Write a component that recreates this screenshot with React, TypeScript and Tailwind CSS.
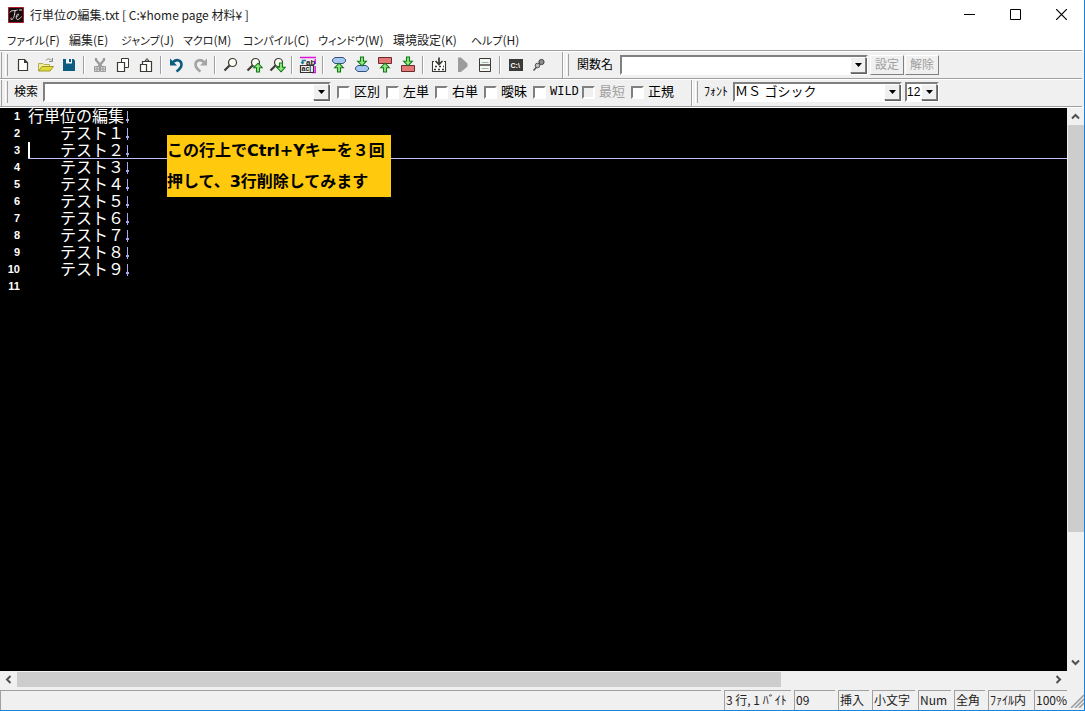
import React from "react";

const GOTHIC = "font-['Liberation_Sans','Noto_Sans_CJK_JP',sans-serif]";
const UI = "font-['Noto_Sans_CJK_JP',sans-serif]";

/* ---------- toolbar icons ---------- */

function Icon({ children }: { children: React.ReactNode }) {
  return (
    <svg width="18" height="18" viewBox="0 0 18 18" aria-hidden="true" className="shrink-0">
      {children}
    </svg>
  );
}

const UpArrow = ({ x, y }: { x: number; y: number }) => (
  <path
    transform={`translate(${x} ${y})`}
    d="M5 .7 L9.3 5.2 H6.5 V9.5 H3.5 V5.2 H.7 Z"
    fill="#93e57f"
    stroke="#117a17"
    strokeWidth="1.1"
  />
);
const DownArrow = ({ x, y }: { x: number; y: number }) => (
  <path
    transform={`translate(${x} ${y})`}
    d="M5 9.3 L9.3 4.8 H6.5 V.5 H3.5 V4.8 H.7 Z"
    fill="#93e57f"
    stroke="#117a17"
    strokeWidth="1.1"
  />
);
const Lens = () => (
  <>
    <circle cx="10.5" cy="6.5" r="4" fill="#fdfdf6" stroke="#3b3933" strokeWidth="1.2" />
    <path d="M7.5 9.5 L2.5 14.5" stroke="#3b3933" strokeWidth="2.2" />
  </>
);

const NewIcon = (
  <Icon>
    <path d="M4.5 3.5 H10.5 L13.5 6.5 V14.5 H4.5 Z" fill="#fff" stroke="#3b3933" strokeWidth="1.2" />
    <path d="M10 3 V7 H14 Z" fill="#3b3933" />
  </Icon>
);
const OpenIcon = (
  <Icon>
    <path d="M1.5 15 V7.5 H6 L7 8.5 H12.5 V10" fill="#f0ee9a" stroke="#b5ad55" />
    <path d="M1.5 15 L5 10.5 H16.5 L13 15 Z" fill="#e1d93a" stroke="#a09a2a" />
    <path d="M9 4.5 C10 2.5 13 2.5 15 4.5 M15.5 2 V5.5 H12" fill="none" stroke="#8a8a84" />
  </Icon>
);
const SaveIcon = (
  <Icon>
    <path d="M3 3 H13.5 L15 4.5 V15 H3 Z" fill="#0b5c80" />
    <path d="M6 3 H12 V7.5 H6 Z" fill="#f4f8fa" />
    <path d="M9 3 H11 V6 H9 Z" fill="#0b5c80" />
  </Icon>
);
const CutIcon = (
  <Icon>
    <path d="M5 2 V4 L10.5 10.5 M13 2 V4 L7.5 10.5" fill="none" stroke="#9a9a9a" strokeWidth="2.2" />
    <path d="M3.5 10.5 H8.5 V15.5 H3.5 Z M9.5 10.5 H14.5 V15.5 H9.5 Z" fill="#d8d8d8" stroke="#9a9a9a" />
    <path d="M6 11 V15 M4 13 H8 M12 11 V15 M10 13 H14" stroke="#9a9a9a" />
  </Icon>
);
const CopyIcon = (
  <Icon>
    <path d="M7.5 2.5 H14.5 V11.5 H7.5 Z" fill="#fff" stroke="#3b3933" />
    <path d="M3.5 6.5 H10.5 V15.5 H3.5 Z" fill="#fff" stroke="#3b3933" strokeWidth="1.2" />
  </Icon>
);
const PasteIcon = (
  <Icon>
    <path d="M5.5 8 V5.5 H14.5 V15.5 H10" fill="#fff" stroke="#3b3933" strokeWidth="1.2" />
    <path d="M8 5 L10 2.5 L12 5 Z" fill="#fff" stroke="#3b3933" />
    <path d="M3.5 8.5 H9.5 V15.5 H3.5 Z" fill="#fff" stroke="#3b3933" strokeWidth="1.2" />
  </Icon>
);
const UndoIcon = (
  <Icon>
    <path d="M5 6 C9 2.5 13.5 4.5 13.5 8.5 C13.5 11 12 13 8.5 15.5" fill="none" stroke="#0b5c80" strokeWidth="2.6" />
    <path d="M2 2.5 V9.5 H9 Z" fill="#0b5c80" />
  </Icon>
);
const RedoIcon = (
  <Icon>
    <path d="M13 6 C9 2.5 4.5 4.5 4.5 8.5 C4.5 11 6 13 9.5 15.5" fill="none" stroke="#a3a3a3" strokeWidth="2.6" />
    <path d="M16 2.5 V9.5 H9 Z" fill="#a3a3a3" />
  </Icon>
);
const FindIcon = (
  <Icon>
    <Lens />
  </Icon>
);
const FindUpIcon = (
  <Icon>
    <Lens />
    <UpArrow x={8} y={6.5} />
  </Icon>
);
const FindDownIcon = (
  <Icon>
    <Lens />
    <DownArrow x={8} y={6.5} />
  </Icon>
);
const ReplaceIcon = (
  <Icon>
    <path d="M1 1.5 H17 M16.2 3 V8 M16.2 10 V16 M13 16.5 H17" fill="none" stroke="#e010e0" strokeWidth="1.4" />
    <path d="M7 4.5 H3.5 V8" fill="none" stroke="#187898" strokeWidth="1.6" />
    <path d="M1.5 6 L3.5 8.5 L5.5 6" fill="#187898" />
    <text x="7" y="8.5" fontSize="8" fontWeight="700" fontFamily="Liberation Sans" fill="#222">ab</text>
    <path d="M1.5 9.5 H14.5 V16.5 H1.5 Z" fill="#f4f4f4" stroke="#333" strokeWidth="1.2" />
    <text x="2.5" y="15" fontSize="7" fontWeight="700" fontFamily="Liberation Sans" fill="#222">ac|</text>
  </Icon>
);
const PillUpIcon = (
  <Icon>
    <path d="M5 1.5 H13 L15.5 3.5 V5.5 L13 7.5 H5 L2.5 5.5 V3.5 Z" fill="#a8c8f4" stroke="#34507c" />
    <UpArrow x={4} y={6.5} />
  </Icon>
);
const PillDownIcon = (
  <Icon>
    <path d="M5 9.5 H13 L15.5 11.5 V13.5 L13 15.5 H5 L2.5 13.5 V11.5 Z" fill="#a8c8f4" stroke="#34507c" />
    <DownArrow x={4} y={0.5} />
  </Icon>
);
const BoxUpIcon = (
  <Icon>
    <path d="M2.5 1.5 H15.5 V7.5 H2.5 Z" fill="#e27878" stroke="#6c2a2a" />
    <UpArrow x={4} y={6.5} />
  </Icon>
);
const BoxDownIcon = (
  <Icon>
    <path d="M2.5 9.5 H15.5 V15.5 H2.5 Z" fill="#e27878" stroke="#6c2a2a" />
    <DownArrow x={4} y={0.5} />
  </Icon>
);
const CompileIcon = (
  <Icon>
    <path d="M4 5.5 H2.5 V15.5 H15.5 V5.5 H14" fill="#fff" stroke="#3b3933" strokeWidth="1.1" />
    <path d="M9 1.5 V8 M5.5 5 L9 8.5 L12.5 5" fill="none" stroke="#3b3933" strokeWidth="1.7" />
    <path d="M5 10.5 H14 M4 13.5 H14" stroke="#3b3933" strokeWidth="1.6" strokeDasharray="2 2" />
  </Icon>
);
const RunIcon = (
  <Icon>
    <path d="M5 1.5 H8 L14.5 7.5 V10.5 L8 16 H5 Z" fill="#9c9c9c" />
  </Icon>
);
const SplitIcon = (
  <Icon>
    <path d="M3.5 2.5 H14.5 V15.5 H3.5 Z" fill="#f6f6f2" stroke="#3b3933" />
    <path d="M3.5 9 H14.5" stroke="#3b3933" strokeWidth="1.4" />
    <path d="M5.5 6.5 H12.5 M5.5 12.5 H12.5" stroke="#9db8b0" />
  </Icon>
);
const ConsoleIcon = (
  <Icon>
    <path d="M2 3 H16 V15 H2 Z" fill="#3a3a38" />
    <text x="3.5" y="11.5" fontSize="7" fontWeight="700" fontFamily="Liberation Sans" fill="#fff">C:\</text>
  </Icon>
);
const PlugIcon = (
  <Icon>
    <path d="M3.5 14.5 L8 9.5" stroke="#55534d" strokeWidth="1.6" />
    <circle cx="7.5" cy="9.5" r="2.3" fill="#bbb" stroke="#55534d" />
    <circle cx="11.5" cy="6" r="2.6" fill="#8d8d8d" stroke="#44423d" />
  </Icon>
);

type Tool = { label: string; icon: React.ReactNode; disabled?: boolean };

const toolGroups: Tool[][] = [
  [
    { label: "新規作成", icon: NewIcon },
    { label: "開く", icon: OpenIcon },
    { label: "保存", icon: SaveIcon },
  ],
  [
    { label: "切り取り", icon: CutIcon, disabled: true },
    { label: "コピー", icon: CopyIcon },
    { label: "貼り付け", icon: PasteIcon },
  ],
  [
    { label: "元に戻す", icon: UndoIcon },
    { label: "やり直し", icon: RedoIcon, disabled: true },
  ],
  [
    { label: "検索ダイアログ", icon: FindIcon },
    { label: "上検索", icon: FindUpIcon },
    { label: "下検索", icon: FindDownIcon },
  ],
  [{ label: "置換", icon: ReplaceIcon }],
  [
    { label: "前の関数", icon: PillUpIcon },
    { label: "次の関数", icon: PillDownIcon },
    { label: "前のマーク", icon: BoxUpIcon },
    { label: "次のマーク", icon: BoxDownIcon },
  ],
  [
    { label: "コンパイル", icon: CompileIcon },
    { label: "実行", icon: RunIcon, disabled: true },
    { label: "分割", icon: SplitIcon },
  ],
  [
    { label: "コマンドプロンプト", icon: ConsoleIcon },
    { label: "接続", icon: PlugIcon },
  ],
];

/* ---------- small controls ---------- */

const SUNKEN = "border-2 border-t-[#808080] border-l-[#808080] border-r-white border-b-white";
const RAISED = "border border-t-white border-l-white border-r-[#808080] border-b-[#808080]";

const ArrowGlyph = () => (
  <svg width="7" height="4" viewBox="0 0 7 4" aria-hidden="true">
    <path d="M0 0 H7 L3.5 4 Z" fill="#000" />
  </svg>
);

function Combo({ id, label, width }: { id: string; label: string; width: string }) {
  return (
    <div className={`flex h-5 bg-white ${SUNKEN} ${width}`}>
      <input id={id} aria-label={label} className="min-w-0 flex-1 bg-white px-0.5 text-xs outline-none" />
      <button
        aria-label={`${label}の履歴`}
        className={`flex w-4 items-center justify-center bg-[#f0f0f0] shadow-[1px_1px_0_#606060] ${RAISED}`}
      >
        <ArrowGlyph />
      </button>
    </div>
  );
}

function Drop({ id, label, value, width, text }: { id: string; label: string; value: string; width: string; text: string }) {
  return (
    <div className={`relative h-5 bg-white ${SUNKEN} ${width}`}>
      <select
        id={id}
        aria-label={label}
        className={`block h-4 w-full appearance-none bg-white p-0 leading-4 outline-none ${text}`}
      >
        <option>{value}</option>
      </select>
      <span
        className={`pointer-events-none absolute top-0 right-0 flex h-4 w-4 items-center justify-center bg-[#f0f0f0] shadow-[1px_1px_0_#606060] ${RAISED}`}
      >
        <ArrowGlyph />
      </span>
    </div>
  );
}

const Grip = () => <span className="mr-1.5 h-[22px] w-[3px] shrink-0 border-r border-l border-r-[#a0a0a0] border-l-white" />;

function Band({ children, className = "" }: { children: React.ReactNode; className?: string }) {
  return (
    <div className={`flex h-[26px] items-center border-l border-[#a0a0a0] pl-[3px] ${className}`}>
      <Grip />
      {children}
    </div>
  );
}

const options = [
  { id: "case", label: "区別" },
  { id: "left", label: "左単" },
  { id: "right", label: "右単" },
  { id: "fuzzy", label: "曖昧" },
  { id: "wild", label: "WILD" },
  { id: "shortest", label: "最短", disabled: true },
  { id: "regex", label: "正規" },
];

const menus = [
  { label: "ファイル", accel: "(F)", width: "w-[62px]", size: "text-[11px]" },
  { label: "編集", accel: "(E)", width: "w-[52px]", size: "text-xs" },
  { label: "ジャンプ", accel: "(J)", width: "w-[62px]", size: "text-[11px]" },
  { label: "マクロ", accel: "(M)", width: "w-[60px]", size: "text-[11px]" },
  { label: "コンパイル", accel: "(C)", width: "w-[75px]", size: "text-[11px]" },
  { label: "ウィンドウ", accel: "(W)", width: "w-[75px]", size: "text-[11px]" },
  { label: "環境設定", accel: "(K)", width: "w-[78px]", size: "text-xs" },
  { label: "ヘルプ", accel: "(H)", width: "w-[62px]", size: "text-[11px]" },
];

const lines = [
  "行単位の編集",
  "　　テスト１",
  "　　テスト２",
  "　　テスト３",
  "　　テスト４",
  "　　テスト５",
  "　　テスト６",
  "　　テスト７",
  "　　テスト８",
  "　　テスト９",
  "",
];
const CURRENT = 2;

const statusCells = [
  { text: "3 行, 1 ﾊﾞｲﾄ", width: "w-[67px]" },
  { text: "09", width: "w-[41px]" },
  { text: "挿入", width: "w-[31px]" },
  { text: "小文字", width: "w-[43px]" },
  { text: "Num", width: "w-[33px]" },
  { text: "全角", width: "w-[31px]" },
  { text: "ﾌｧｲﾙ内", width: "w-[43px]" },
  { text: "100%", width: "w-[33px]" },
];

const chevrons = {
  up: "M1 6.5 L4.5 3 L8 6.5",
  down: "M1 2.5 L4.5 6 L8 2.5",
  left: "M6.5 1 L3 4.5 L6.5 8",
  right: "M2.5 1 L6 4.5 L2.5 8",
};

function ScrollButton({ dir, label }: { dir: keyof typeof chevrons; label: string }) {
  return (
    <button aria-label={label} className="flex h-[17px] w-[17px] shrink-0 items-center justify-center">
      <svg width="9" height="9" viewBox="0 0 9 9" aria-hidden="true">
        <path d={chevrons[dir]} fill="none" stroke="#505050" strokeWidth="2" />
      </svg>
    </button>
  );
}

/* ---------- page sections ---------- */

function TitleBar() {
  return (
    <header className="flex h-[29px] items-center bg-white pl-2">
      <svg width="16" height="16" viewBox="0 0 16 16" aria-hidden="true" className="mr-1.5">
        <path d="M.5 .5 H15.5 V15.5 H.5 Z" fill="#160c0e" stroke="#a51f28" />
        <path
          d="M2 5.5 C3 2.5 6 4.5 9.5 3 M7 4 C6.5 8 6 12 3.5 12.5 C2.5 12.5 2.5 11 3.5 11 M8 10 C10 9.5 11.5 7 10 7 C8 7.5 7.5 12.5 9.5 12.5 C11 12.5 12.5 11 13.5 9.5 M11 3 H14"
          fill="none"
          stroke="#e8dcdc"
        />
      </svg>
      <h1 className="flex-1 text-xs text-[#222222] [font-feature-settings:'palt']">行単位の編集.txt [ C:¥home page 材料¥ ]</h1>
      <button aria-label="最小化" className="flex h-7 w-[46px] items-center justify-center">
        <svg width="11" height="11" viewBox="0 0 11 11"><path d="M0 5.5 H11" stroke="#000" /></svg>
      </button>
      <button aria-label="最大化" className="flex h-7 w-[46px] items-center justify-center">
        <svg width="11" height="11" viewBox="0 0 11 11"><path d="M.5 .5 H10.5 V10.5 H.5 Z" fill="none" stroke="#000" /></svg>
      </button>
      <button aria-label="閉じる" className="flex h-7 w-[46px] items-center justify-center">
        <svg width="11" height="11" viewBox="0 0 11 11"><path d="M0 0 L11 11 M11 0 L0 11" stroke="#000" strokeWidth="1.2" /></svg>
      </button>
    </header>
  );
}

function Toolbars() {
  return (
    <div className={`mr-0.5 border-b border-[#a0a0a0] ${GOTHIC} text-xs`}>
      <div className="flex border-t border-[#a0a0a0] shadow-[inset_0_1px_0_#fff] pt-px">
        <Band className="ml-px w-[561px]">
          <div className="-ml-[3px] flex items-center">
            {toolGroups.map((group, i) => (
              <React.Fragment key={i}>
                {i > 0 && (
                  <span className="flex w-2 justify-center">
                    <span className="h-[18px] w-0.5 border-r border-l border-r-white border-l-[#a0a0a0]" />
                  </span>
                )}
                {group.map((t) => (
                  <button
                    key={t.label}
                    aria-label={t.label}
                    disabled={t.disabled}
                    className="flex h-[22px] w-[23px] items-center justify-center"
                  >
                    {t.icon}
                  </button>
                ))}
              </React.Fragment>
            ))}
          </div>
        </Band>
        <Band className="shadow-[inset_1px_0_0_#fff]">
          <label htmlFor="func" className="mr-1.5 ml-0.5 w-[37px] whitespace-nowrap">関数名</label>
          <Combo id="func" label="関数名" width="w-[248px]" />
          <button disabled className={`ml-0.5 h-5 w-[34px] text-xs leading-4 text-[#a0a0a0] ${RAISED}`}>設定</button>
          <button disabled className={`ml-px h-5 w-[34px] text-xs leading-4 text-[#a0a0a0] ${RAISED}`}>解除</button>
        </Band>
      </div>
      <div className="flex border-t border-[#a0a0a0] shadow-[inset_0_1px_0_#fff] pt-px">
        <Band className="ml-px w-[690px] pb-0.5">
          <label htmlFor="find" className="mr-1 w-[25px] whitespace-nowrap">検索</label>
          <Combo id="find" label="検索" width="w-[288px]" />
          <div className="ml-1.5 flex">
            {options.map((o) => (
              <div key={o.id} className="flex w-[49px] items-center gap-1">
                <input
                  id={o.id}
                  type="checkbox"
                  disabled={o.disabled}
                  className={`h-[13px] w-[13px] shrink-0 appearance-none border-2 border-t-[#808080] border-r-white border-b-white border-l-[#808080] ${o.disabled ? "bg-[#f0f0f0]" : "bg-white"}`}
                />
                <label
                  htmlFor={o.id}
                  className={`leading-4 whitespace-nowrap ${o.disabled ? "text-[#a0a0a0]" : ""} ${o.label === "WILD" ? "font-['Liberation_Mono',monospace] text-xs" : "text-[13px]"}`}
                >
                  {o.label}
                </label>
              </div>
            ))}
          </div>
        </Band>
        <Band className="pb-0.5 shadow-[inset_1px_0_0_#fff]">
          <label htmlFor="face" className="mr-1 w-[25px] whitespace-nowrap">ﾌｫﾝﾄ</label>
          <Drop id="face" label="フォント" value="ＭＳ ゴシック" width="w-[169px]" text="text-[13px]" />
          <div className="w-[3px]" />
          <Drop id="size" label="文字サイズ" value="12" width="w-[34px]" text="text-xs" />
        </Band>
      </div>
    </div>
  );
}

function Editor() {
  return (
    <div role="textbox" aria-multiline="true" aria-label="本文" className={`relative min-w-0 flex-1 overflow-hidden bg-black text-white ${GOTHIC}`}>
      <ol>
        {lines.map((line, i) => (
          <li key={i} className="flex h-[17px] items-stretch">
            <span className="mr-2 w-5 shrink-0 text-right text-[11px] leading-4 font-bold">{i + 1}</span>
            <span
              className={`flex flex-1 items-start border-b ${i === CURRENT ? "border-[#c0c0ff] shadow-[inset_2px_0_0_#fff]" : "border-transparent"}`}
            >
              <span className="text-base leading-[17px] font-normal whitespace-pre">{line}</span>
              {i < lines.length - 1 && (
                <svg width="6" height="16" viewBox="0 0 6 16" aria-hidden="true">
                  <path d="M3.5 3 V15" stroke="#a8a8f0" />
                  <path d="M2 11 H5 V13 H2 Z" fill="#a8a8f0" />
                </svg>
              )}
            </span>
          </li>
        ))}
      </ol>
      <p className="absolute top-[27px] left-[167px] w-[224px] bg-[#ffc90e] font-['DejaVu_Sans','Noto_Sans_CJK_JP',sans-serif] text-base leading-[31px] font-bold whitespace-nowrap text-black">
        この行上でCtrl+Yキーを３回
        <br />
        押して、3行削除してみます
      </p>
    </div>
  );
}

export default function App() {
  return (
    <div lang="ja" className={`flex h-screen flex-col overflow-hidden border-r border-b border-[#1883d7] bg-[#f0f0f0] text-black ${UI}`}>
      <TitleBar />
      <nav className="flex h-[21px] items-center bg-white pl-[7px] text-[#222222]">
        {menus.map((m) => (
          <button key={m.label} className={`flex items-baseline text-xs leading-5 whitespace-nowrap [font-feature-settings:'palt'] ${m.width}`}>
            <span className={m.size}>{m.label}</span>
            {m.accel}
          </button>
        ))}
      </nav>
      <Toolbars />
      <main className="flex min-h-0 flex-1 border-t border-white">
        <Editor />
        <div className="flex w-[17px] shrink-0 flex-col">
          <ScrollButton dir="up" label="上へスクロール" />
          <div className="flex-1">
            <div className="ml-px h-[77%] bg-[#cdcdcd]" />
          </div>
          <ScrollButton dir="down" label="下へスクロール" />
        </div>
      </main>
      <div className="mr-[17px] flex h-[17px] shrink-0">
        <ScrollButton dir="left" label="左へスクロール" />
        <div className="flex-1 pt-px">
          <div className="h-[15px] w-[74%] bg-[#cdcdcd]" />
        </div>
        <ScrollButton dir="right" label="右へスクロール" />
      </div>
      <footer className="flex h-[22px] shrink-0 gap-[3px] pt-0.5 text-xs text-[#222222]">
        <div className="flex-1 border-t border-l border-[#a0a0a0]" />
        {statusCells.map((c) => (
          <div key={c.text} className={`shrink-0 border-t border-l border-[#a0a0a0] pl-px leading-[18px] whitespace-nowrap ${c.width}`}>
            {c.text}
          </div>
        ))}
        <svg width="14" height="18" viewBox="0 0 14 18" aria-hidden="true" className="shrink-0">
          <path d="M1 18 L14 5 M5 18 L14 9 M9 18 L14 13" stroke="#a0a0a0" strokeWidth="1.6" />
        </svg>
      </footer>
    </div>
  );
}
